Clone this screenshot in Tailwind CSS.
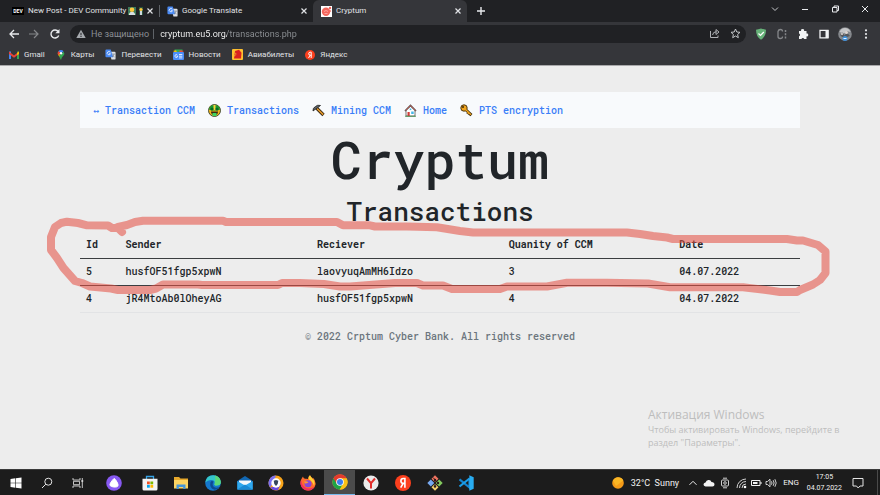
<!doctype html>
<html lang="ru">
    <head>
        <meta charset="UTF-8">
        <meta name="viewport" content="width=device-width, initial-scale=1.0">
        <title>Cryptum</title>
        <script src="https://cdn.jsdelivr.net/npm/@tailwindcss/browser@4"></script>
    </head>

    <body class="h-screen flex flex-col overflow-hidden bg-[#ededed] font-[Roboto,'Noto_Sans',sans-serif] text-[8px] leading-3">

        <!-- shared icons -->
        <svg class="hidden">
            <symbol id="close" viewBox="0 0 10 10"><path d="M2.5 2.5l5 5M7.5 2.5l-5 5" fill="none" stroke="currentColor" stroke-width="1.2"/></symbol>
            <symbol id="translate" viewBox="0 0 12 12">
                <path d="M5 3h5.5q1 0 1 1v6.500q0 1-1 1H7z" fill="#dfe1e5"/>
                <path d="M1.500.5h4.700l2.800 8.500H1.500q-1 0-1-1v-6.500q0-1 1-1z" fill="#4a8af4"/>
                <path d="M5.800 3.600a1.800 1.800 0 1 0 .2 1.500H4.300" fill="none" stroke="#fff" stroke-width=".8"/>
                <path d="M7.500 5.500h3.300M9.800 5.500q-.3 2-2 3.300M8.300 6.800l2 2.200" fill="none" stroke="#6d7a8c" stroke-width=".7"/>
            </symbol>
            <symbol id="yandex" viewBox="0 0 16 16">
                <circle cx="8" cy="8" r="8" fill="#fc3f1d"/>
                <path d="M9.900 12.700V3.500H8.300q-2.400 0-2.400 2.500 0 2.300 2.400 2.400h1.600M8 8.600l-2.300 4.100" fill="none" stroke="#fff" stroke-width="1.600"/>
            </symbol>
        </svg>

        <!-- tabs -->
        <header class="shrink-0 bg-[#202124] text-[#e1e3e6]">
            <div class="flex h-[22px]">
                <div class="w-[159px] flex items-center pl-3 pr-1">
                    <span class="w-3 h-2 bg-black text-white text-[5px] leading-2 font-bold text-center">DEV</span>
                    <span class="ml-1 whitespace-nowrap">New Post - DEV Community</span>
                    <svg class="ml-[2px] shrink-0 w-4 h-2" viewBox="0 0 16 8">
                        <rect width="8" height="8" fill="#3d7a5c"/><circle cx="4" cy="2.800" r="2.300" fill="#ffc83d"/><path d="M1 8q0-3 3-3t3 3z" fill="#f4ece0"/><rect x="2" y="5.500" width="4" height="2.500" fill="#d5dde3"/>
                        <rect x="11" width="4" height="8" fill="#28553f"/><circle cx="13" cy="2.500" r="1.600" fill="#ffc83d"/><rect x="12" y="4" width="2" height="4" fill="#cfd8dc"/>
                    </svg>
                    <button class="ml-auto" aria-label="Close tab"><svg class="w-[10px] h-[10px]"><use href="#close"/></svg></button>
                </div>
                <div class="w-[154px] flex items-center pl-2 pr-1">
                    <span class="-ml-2 mr-[7px] w-px h-3 bg-[#5f6368]"></span>
                    <svg class="w-[11px] h-[11px]"><use href="#translate"/></svg>
                    <span class="ml-1">Google Translate</span>
                    <button class="ml-auto" aria-label="Close tab"><svg class="w-[10px] h-[10px]"><use href="#close"/></svg></button>
                </div>
                <div class="w-[154px] flex items-center pl-2 pr-1 rounded-t-md bg-[#35363a]">
                    <svg class="w-[11px] h-[11px]" viewBox="0 0 11 11">
                        <rect width="11" height="11" fill="#fff"/><circle cx="5" cy="5.800" r="4.200" fill="#f4665c"/><circle cx="9" cy="2" r="1.200" fill="#f4665c"/><circle cx="9.500" cy="5" r=".7" fill="#f4665c"/><path d="M3 5.500q2-2 4 0M3.500 7.500h3" stroke="#fbb" fill="none" stroke-width=".7"/>
                    </svg>
                    <span class="ml-1">Cryptum</span>
                    <button class="ml-auto" aria-label="Close tab"><svg class="w-[10px] h-[10px]"><use href="#close"/></svg></button>
                </div>
                <button class="ml-[9px]" aria-label="New tab"><svg class="w-[10px] h-[10px]" viewBox="0 0 10 10"><path d="M5 1v8M1 5h8" stroke="#e8eaed" stroke-width="1.400"/></svg></button>
                <div class="ml-auto mr-[10px] pb-1 flex items-center gap-5">
                    <button aria-label="Search tabs"><svg class="w-[10px] h-[10px]" viewBox="0 0 10 10"><path d="M2 3.500l3 3 3-3" fill="none" stroke="#c6c8cb"/></svg></button>
                    <button aria-label="Minimize"><svg class="w-[10px] h-[10px]" viewBox="0 0 10 10"><path d="M2 5.500h6" stroke="#e8eaed"/></svg></button>
                    <button aria-label="Restore"><svg class="w-[10px] h-[10px]" viewBox="0 0 10 10"><path d="M2.500 3.500h4.500v4.500H2.500zM4 3.500V2h4.500v4.500H7" fill="none" stroke="#e8eaed"/></svg></button>
                    <button aria-label="Close"><svg class="w-[10px] h-[10px]" viewBox="0 0 10 10"><path d="M2 2l6 6M8 2l-6 6" stroke="#e8eaed"/></svg></button>
                </div>
            </div>

            <!-- toolbar -->
            <div class="bg-[#35363a] border-b border-[#a9a9ab]">
                <div class="h-[23px] flex items-center pl-2">
                    <button aria-label="Back"><svg class="w-3 h-3" viewBox="0 0 12 12"><path d="M11 6H2M6 2L2 6l4 4" fill="none" stroke="#e8eaed" stroke-width="1.300"/></svg></button>
                    <button class="ml-2" aria-label="Forward"><svg class="w-3 h-3" viewBox="0 0 12 12"><path d="M1 6h9M6 2l4 4-4 4" fill="none" stroke="#85878a" stroke-width="1.200"/></svg></button>
                    <button class="ml-[9px]" aria-label="Reload"><svg class="w-3 h-3" viewBox="0 0 12 12"><path d="M9.700 7.500A4 4 0 1 1 9.300 3.700" fill="none" stroke="#e8eaed" stroke-width="1.400"/><path d="M10.500 1v4.200H6.300z" fill="#e8eaed"/></svg></button>
                    <div class="ml-[9px] flex-1 h-[18px] rounded-full bg-[#202124] flex items-center pl-[6px] pr-[5px] text-[9px]">
                        <svg class="w-[10px] h-[10px]" viewBox="0 0 10 10"><path d="M5 .8L9.700 9H.3z" fill="#a5a9ad"/><path d="M5 3.800v2.500M5 7v1" stroke="#202124"/></svg>
                        <label for="address" class="ml-[5px] text-[#8b8f94] whitespace-nowrap">Не защищено</label>
                        <span class="ml-1 w-px h-[10px] bg-[#5f6368]"></span>
                        <input id="address" type="text" value="cryptum.eu5.org/transactions.php" class="ml-[6px] flex-1 h-3 bg-[linear-gradient(to_right,#fff_67px,#8f9397_67px)] bg-clip-text text-transparent outline-none">
                        <button aria-label="Share"><svg class="w-[11px] h-[11px]" viewBox="0 0 11 11"><path d="M1.500 3v6.500h7.500V7.500M3.500 7q.5-3.300 4-3.300M7 1.500l3 2.500-3 2.500V1.500z" fill="none" stroke="#aeb1b5"/></svg></button>
                        <button class="ml-[10px]" aria-label="Bookmark this page"><svg class="w-[11px] h-[11px]" viewBox="0 0 11 11"><path d="M5.500 1l1.300 3 3.200.3-2.400 2.200.7 3.200-2.800-1.700-2.800 1.700.7-3.200L1 4.300 4.200 4z" fill="none" stroke="#c4c7ca"/></svg></button>
                    </div>
                    <div class="ml-[9px] mr-2 flex items-center gap-[9px]">
                        <button aria-label="AdGuard"><svg class="w-3 h-3" viewBox="0 0 12 12"><path d="M6 .5q3 1 5 1.200 0 7-5 10-5-3-5-10Q3 1.500 6 .5z" fill="#67b279"/><path d="M3.500 5.500l2 2 3.300-3.500" fill="none" stroke="#fff" stroke-width="1.200"/></svg></button>
                        <button aria-label="Extension"><svg class="w-3 h-3" viewBox="0 0 12 12"><path d="M6.500 3.500Q6.500 1.500 4.500 1.500T2 3.500v5q0 2 2.300 2t2.200-2" fill="none" stroke="#85878a" stroke-width="1.300"/><path d="M9.500 2v8.500" stroke="#85878a" stroke-width="1.500" stroke-dasharray="2 1.200"/></svg></button>
                        <button aria-label="Extensions"><svg class="w-3 h-3" viewBox="0 0 12 12"><path d="M2 3h2.200a1.500 1.500 0 1 1 2.800 0h2.500v2.600a1.400 1.400 0 1 1 0 2.700V11H7.200a1.400 1.400 0 0 0-2.700 0H2V8.300a1.400 1.400 0 0 0 0-2.700z" fill="#f1f3f4"/></svg></button>
                        <button aria-label="Side panel"><svg class="w-3 h-3" viewBox="0 0 12 12"><path d="M2 2.300h8v7.500H2z" fill="none" stroke="#f1f3f4" stroke-width="1.300"/><path d="M7.500 2h3v8h-3z" fill="#f1f3f4"/></svg></button>
                        <button aria-label="Profile"><svg class="w-[14px] h-[14px] -mx-px" viewBox="0 0 14 14"><circle cx="7" cy="7" r="6.800" fill="#85888c"/><path d="M1.500 5Q3 1 7 1t5.500 4L9 4 6 6.500z" fill="#c5c6c8"/><path d="M2 8l2.500-2.500 2 3L9 5.500 12 9l-3 1H4z" fill="#55585d"/><circle cx="8.500" cy="5.500" r="1.500" fill="#ded5d0"/><circle cx="4" cy="7" r="1" fill="#dfd8d4"/><circle cx="7" cy="11.500" r="2.500" fill="#3f8fd8"/><path d="M5.500 11.500h3" stroke="#e3f0ff"/></svg></button>
                        <button aria-label="Menu"><svg class="w-3 h-3" viewBox="0 0 12 12" fill="#e8eaed"><circle cx="6" cy="2.300" r="1.100"/><circle cx="6" cy="6" r="1.100"/><circle cx="6" cy="9.700" r="1.100"/></svg></button>
                    </div>
                </div>
                <nav class="h-5 pb-px pl-[9px] flex items-center gap-[11px] whitespace-nowrap">
                    <a href="#" class="flex items-center gap-[5px]">
                        <svg class="w-[10px] h-[10px]" viewBox="0 0 10 10"><path d="M0 1.500h2V9H0z" fill="#4285f4"/><path d="M8 1.500h2V9H8z" fill="#34a853"/><path d="M0 1.500L5 5.500l5-4v2.400L5 7.700 0 3.900z" fill="#ea4335"/><path d="M8 3.100l2-1.600v2.400L8 5.300z" fill="#fbbc04"/></svg>
                        Gmail
                    </a>
                    <a href="#" class="flex items-center gap-[5px]">
                        <svg class="w-[10px] h-[10px]" viewBox="0 0 10 10"><path d="M5 10Q4.500 7 2.500 5.500 1 3 3 1.200z" fill="#fbbc04"/><path d="M5 10Q5.500 7 7.500 5.500 9 3.500 7.500 1.500L3 6z" fill="#34a853"/><path d="M5 0Q3.300 0 2.300 1.300L5 3.500l2.500-2.300Q6.500 0 5 0z" fill="#4285f4"/><path d="M2.300 1.300Q1 3 2 5l3-2z" fill="#ea4335"/><circle cx="5" cy="3.300" r="1.200" fill="#fff"/></svg>
                        Карты
                    </a>
                    <a href="#" class="flex items-center gap-[5px]">
                        <svg class="w-[11px] h-[11px]"><use href="#translate"/></svg>
                        Перевести
                    </a>
                    <a href="#" class="flex items-center gap-[5px]">
                        <svg class="w-[11px] h-[11px]" viewBox="0 0 11 11"><path d="M1.500.5h8v4h-8z" fill="#34a853"/><path d="M0 2l3-.7 2 4z" fill="#fbbc04"/><path d="M11 2L7 1.300l-2 4z" fill="#ea4335"/><rect y="3" width="11" height="8" rx="1" fill="#4a8df8"/><path d="M4.300 6A1.400 1.400 0 1 0 4.700 7.200H3.500M6 5.500h3.300M6 7.200h3.300M6 8.900h3.300" fill="none" stroke="#fff" stroke-width=".8"/></svg>
                        Новости
                    </a>
                    <a href="#" class="flex items-center gap-[5px]">
                        <svg class="w-[11px] h-[11px]" viewBox="0 0 11 11"><rect width="11" height="11" rx="1" fill="#fdc02f"/><path d="M2 9.500L3 2l4-1.200 2.500 3L9 9.500z" fill="#d9201f"/><path d="M1 8l3-2.500M3 4l1.500 1" stroke="#fdc02f" stroke-width=".7"/></svg>
                        Авиабилеты
                    </a>
                    <a href="#" class="flex items-center gap-[5px]">
                        <svg class="w-[10px] h-[10px]"><use href="#yandex"/></svg>
                        Яндекс
                    </a>
                </nav>
            </div>
        </header>

        <!-- page -->
        <main class="flex-1 min-h-0 flex flex-col px-20 pt-[26px] text-[#212529] font-['Roboto_Mono','DejaVu_Sans_Mono',monospace] text-[10px] font-medium">
            <nav class="h-9 shrink-0 pt-px px-[13px] flex items-center gap-[13px] bg-[#f8fafc] text-[#3b7ef8] whitespace-nowrap">
                <a href="#">↔ Transaction CCM</a>
                <a href="#" class="flex items-center gap-[6px]">
                    <svg class="w-[13px] h-[13px]" viewBox="0 0 13 13"><circle cx="6.500" cy="6.500" r="6" fill="#f4b51d" stroke="#20301c" stroke-width=".8"/><path d="M1 5.500Q1.500 1 6.500 1T12 5.500L9.500 6.500h-6z" fill="#189a33"/><path d="M5.500 1h2v5h-2z" fill="#ffd23c"/><circle cx="4" cy="5" r="1.500" fill="#0c6a24"/><circle cx="9" cy="5" r="1.500" fill="#0c6a24"/><path d="M3 7.500h7q0 3.500-3.500 3.500T3 7.500z" fill="#3a2b10"/><path d="M4.500 9h4v3h-4z" fill="#3fd260"/></svg>
                    Transactions
                </a>
                <a href="#" class="flex items-center gap-[6px]">
                    <svg class="w-[13px] h-[13px]" viewBox="0 0 13 13"><path d="M4.500 4l7 7" stroke="#2b1d0b" stroke-width="3.200"/><path d="M4.500 4l6.700 6.700" stroke="#e5982a" stroke-width="1.700"/><path d="M1 7Q.5 4 3.500 2.500 5.500.5 8.500 1.500L6 3.500 3 5.500z" fill="#5d6266" stroke="#222" stroke-width=".8"/></svg>
                    Mining CCM
                </a>
                <a href="#" class="flex items-center gap-[6px]">
                    <svg class="w-[13px] h-[13px]" viewBox="0 0 13 13"><path d="M2 6v6h9V6L6.500 2z" fill="#fff" stroke="#555" stroke-width=".8"/><path d="M1 7l5.500-5.500L12 7" fill="none" stroke="#555" stroke-width="1.600"/><path d="M1.500 6.500l5-5 5 5" fill="none" stroke="#df5144" stroke-width=".7"/><path d="M3.500 8h2.200v4H3.500z" fill="#d13c38"/><path d="M7.200 7.500h2.500v2.500H7.200z" fill="#43b7e8"/><path d="M5.700 4.500h1.600v1.600H5.700z" fill="#43b7e8"/><path d="M1 12.300h11" stroke="#3a8a43" stroke-width=".8"/></svg>
                    Home
                </a>
                <a href="#" class="flex items-center gap-[6px]">
                    <svg class="w-[13px] h-[13px]" viewBox="0 0 13 13"><path d="M5.500 5.500l6 5.500M8.500 8.500L7.500 10M10.500 10L9.500 11.500" stroke="#3b2808" stroke-width="2.800"/><circle cx="4" cy="4" r="3.200" fill="#f1a51e" stroke="#3b2808" stroke-width=".9"/><path d="M5.500 5.500l5.500 5.200M8.500 8.500L7.800 9.600" stroke="#f1a51e" stroke-width="1.500"/><circle cx="3" cy="3" r="1" fill="#3b2808"/></svg>
                    PTS encryption
                </a>
            </nav>

            <h1 class="text-center text-[52px] leading-[62px]">Cryptum</h1>
            <h2 class="mt-[5px] text-center text-[26px] leading-8">Transactions</h2>

            <div class="relative mt-1">
                <table class="w-full table-fixed text-left">
                    <colgroup>
                        <col class="w-[5.5%]"><col class="w-[26.6%]"><col class="w-[26.6%]"><col class="w-[23.7%]"><col>
                    </colgroup>
                    <thead>
                        <tr class="h-[27px] border-b border-[#3a3d40]">
                            <th class="px-[6px] pt-px">Id</th>
                            <th class="px-[6px] pt-px">Sender</th>
                            <th class="px-[6px] pt-px">Reciever</th>
                            <th class="px-[6px] pt-px">Quanity of CCM</th>
                            <th class="px-[6px] pt-px">Date</th>
                        </tr>
                    </thead>
                    <tbody>
                        <tr class="h-[27px] border-b border-[#3a3d40]">
                            <td class="px-[6px]">5</td>
                            <td class="px-[6px]">husfOF51fgp5xpwN</td>
                            <td class="px-[6px]">laovyuqAmMH6Idzo</td>
                            <td class="px-[6px]">3</td>
                            <td class="px-[6px]">04.07.2022</td>
                        </tr>
                        <tr class="h-[27px] border-b border-[#e2e3e5]">
                            <td class="px-[6px]">4</td>
                            <td class="px-[6px]">jR4MtoAb0lOheyAG</td>
                            <td class="px-[6px]">husfOF51fgp5xpwN</td>
                            <td class="px-[6px]">4</td>
                            <td class="px-[6px]">04.07.2022</td>
                        </tr>
                    </tbody>
                </table>

                <!-- marker line around the newest transaction -->
                <svg class="absolute -left-10 -top-5 w-[calc(100%+80px)] h-[88px] pointer-events-none" viewBox="40 211 800 88" preserveAspectRatio="none">
                    <path d="M122 232L118 228 112 228 108 225.500 87 225.300 78 223 67 221.700 61 223 55 227 51 237V250L57 258 63.500 268 75 281 82 283 90 286.500 111 288.500 118 290H150L156 288.500 163 284.500H198L202 285H278L282 283H300L324 284 340 286.500H350L363 285.500 395 283 417 283 423 285.500H443L452 289H500L507 286.500H547L567 282.800H607L648 283.500 670 287.300H743L770 290.500 780 292H797L800 290 813 284.500 820 280 825.500 273V251.500L818 245 803 240.500 797 240.500 787 239H673L667 237.500 653 236 640 234 627 232.500H473L460 231 437 227.300 407 226.500H375L370 225.300H343L337 222H226L223 220.800H143L135 222 127 225 118 227" fill="none" stroke="#e45144" stroke-opacity=".57" stroke-width="8" stroke-linecap="round" stroke-linejoin="round"/>
                </svg>
            </div>

            <footer class="mt-[18px] text-center text-[#6c757d]">© 2022 Crptum Cyber Bank. All rights reserved</footer>

            <aside class="mt-auto mb-5 -mr-12 self-end w-[200px] font-['Open_Sans',sans-serif] font-normal text-[9px] leading-[13px] text-[#bdbdbd]">
                <p class="text-[12px] leading-4">Активация Windows</p>
                <p>Чтобы активировать Windows, перейдите в раздел "Параметры".</p>
            </aside>
        </main>

        <!-- taskbar -->
        <footer class="shrink-0 h-[26px] flex items-center bg-[#1c1c1c] border-t border-[#3a3a3a] text-[#f2f2f2] whitespace-nowrap">
            <button class="w-[31px] flex justify-center" aria-label="Start"><svg class="w-3 h-3" viewBox="0 0 12 12" fill="#fff"><path d="M.5 2l4.800-.7v4.400H.5zM5.900 1.200L11.500.4v5.300H5.900zM.5 6.300h4.800v4.400L.5 10zM5.900 6.300h5.600v5.300l-5.600-.8z"/></svg></button>
            <button class="w-[31px] flex justify-center" aria-label="Search"><svg class="w-3 h-3" viewBox="0 0 12 12"><circle cx="7.300" cy="4.700" r="3.500" fill="none" stroke="#e4e4e4"/><path d="M4.800 7.200L1 11" stroke="#e4e4e4"/></svg></button>
            <button class="w-[31px] flex justify-center" aria-label="Task view"><svg class="w-3 h-3" viewBox="0 0 12 12" fill="none" stroke="#d8d8d8" stroke-width=".9"><path d="M1 1v2h7V1M1 11V9h7v2M1.500 4.300h6v3.400h-6zM10.300 1v10"/><path d="M9.400 4h1.800" stroke-width="1.800"/></svg></button>
            <button class="w-[41px] flex justify-center" aria-label="Алиса"><svg class="w-4 h-4" viewBox="0 0 16 16"><circle cx="8" cy="8" r="7.800" fill="#8759f2"/><path d="M8 3.500q1.300 0 3.500 4.500t-3.500 4-3.500-4T8 3.500z" fill="#fff" stroke="#fff" stroke-linejoin="round"/></svg></button>
            <div class="w-[348px] h-full grid grid-cols-11">
                <button class="flex items-center justify-center" aria-label="Microsoft Store"><svg class="w-4 h-4" viewBox="0 0 16 16"><path d="M4.500 4V1.500h7V4" fill="none" stroke="#37a5e8" stroke-width="1.300"/><path d="M.5 3.800h15V14q0 1.500-1.500 1.500H2Q.5 15.500.5 14z" fill="#f4f4f4"/><path d="M5 6.500h2.800v2.800H5z" fill="#f25022"/><path d="M8.400 6.500h2.800v2.800H8.400z" fill="#7fba00"/><path d="M5 9.900h2.800v2.800H5z" fill="#00a4ef"/><path d="M8.400 9.900h2.800v2.800H8.400z" fill="#ffb900"/></svg></button>
                <button class="flex items-center justify-center" aria-label="Explorer"><svg class="w-4 h-4" viewBox="0 0 16 16"><path d="M1 2h5l1.500 1.500H15V13H1z" fill="#e8a92c"/><path d="M1 5h14v8.500H1z" fill="#fcd462"/><path d="M3.500 14V9.500h9V14h-2.300v-2H5.800v2z" fill="#4596d8"/></svg></button>
                <button class="flex items-center justify-center" aria-label="Edge"><svg class="w-4 h-4" viewBox="0 0 16 16"><circle cx="8" cy="8" r="7.800" fill="#1577cc"/><path d="M.3 7.500Q1.300.2 8.300.2q7 .5 7.500 6.800 0 3.500-4.300 3.500-3 0-1.800-2Q10 5 6.500 5 2.500 4.800.3 7.500z" fill="#35c6c9"/><path d="M10 .5q5.500 1.500 5.800 6.500 0 3.500-4.300 3.500-3 0-1.800-2Q11 4 10 .5z" fill="#5bd878"/><path d="M5.500 7q-1.500 6 4 7.800 3 .2 5-3-3 1.700-5.500.2Q6.500 10 8.500 6.500 6.500 5.500 5.500 7z" fill="#0c4a93"/></svg></button>
                <button class="flex items-center justify-center" aria-label="Mail"><svg class="w-4 h-4" viewBox="0 0 16 16"><path d="M.3 6L8 1l7.700 5v8.500H.3z" fill="#1268b3"/><path d="M2 5.500h12V11H2z" fill="#f5f9fc"/><path d="M.3 6L8 10.500 15.700 6v8.500H.3z" fill="#2fa8ee"/><path d="M.3 14.500L8 9.500l7.700 5z" fill="#1a8ad4"/></svg></button>
                <button class="flex items-center justify-center" aria-label="Secure Browser"><svg class="w-4 h-4" viewBox="0 0 16 16"><circle cx="8" cy="8" r="7.500" fill="#f9a51a"/><path d="M8 .5A7.500 7.500 0 0 0 2 12.500L5 8z" fill="#7a6ff0"/><path d="M2 12.500Q5 16 10 15.200l2-5z" fill="#6a4be0"/><circle cx="8" cy="8" r="4.700" fill="#fff"/><path d="M8 5l2.300.8Q10.300 9.500 8 11 5.700 9.500 5.700 5.800z" fill="#34445c"/></svg></button>
                <button class="flex items-center justify-center" aria-label="Firefox"><svg class="w-4 h-4" viewBox="0 0 16 16"><path d="M1 5Q2 2.500 3 1.500q.3 1.800 2 2.300Q7 3.500 8 4q.5-2.500 2-3.700Q11 2.500 13 4q0-1-.3-1.800Q15.700 5 15.700 9A7.700 7.700 0 0 1 .5 9Q.3 7 1 5z" fill="#ff6a2c"/><path d="M10 .3Q11 2.500 13 4q2.500 3 1 7-1.500-5-5-6.500-1.500-2 1-4.200z" fill="#ffd035"/><path d="M.5 9A7.700 7.700 0 0 0 14.500 12Q8 15 4 11.500 1.500 9 1 5 .3 7 .5 9z" fill="#f22f5f"/><circle cx="8" cy="8.700" r="3.500" fill="#8748d8"/><path d="M4 6.500q2.500-.8 4.500.7Q7 8.500 5 8.500z" fill="#ff9a30"/></svg></button>
                <button class="flex items-center justify-center bg-[#4b4b4b] border-b border-[#76b9ed]" aria-label="Chrome"><svg class="w-4 h-4" viewBox="0 0 16 16"><circle cx="8" cy="8" r="7.600" fill="#fbc116"/><path d="M8 8L1.400 4.200A7.600 7.600 0 0 0 7.800 15.600L11.200 9.800z" fill="#1ea446"/><path d="M8 4.300h6.600A7.600 7.600 0 0 1 7.800 15.600L11.200 9.800z" fill="#fbc116"/><path d="M1.400 4.200A7.600 7.600 0 0 1 14.600 4.200H8L4.800 9.800z" fill="#e33b2e"/><circle cx="8" cy="8" r="3.800" fill="#fff"/><circle cx="8" cy="8" r="3" fill="#3c7ef0"/></svg></button>
                <button class="flex items-center justify-center" aria-label="Yandex Browser"><svg class="w-4 h-4" viewBox="0 0 16 16"><circle cx="8" cy="8" r="7.600" fill="#ebebeb"/><path d="M4 3.500l4 4.700 4-4.700M8 8v5.500" fill="none" stroke="#e22f2c" stroke-width="2"/></svg></button>
                <button class="flex items-center justify-center" aria-label="Яндекс"><svg class="w-4 h-4"><use href="#yandex"/></svg></button>
                <button class="flex items-center justify-center" aria-label="Git"><svg class="w-4 h-4" viewBox="0 0 16 16"><path d="M8 .2L11.500 3.700 8 7.200 4.500 3.700z" fill="#f07561"/><path d="M3.800 4.500L7.300 8l-3.500 3.500L.3 8z" fill="#78a9f0"/><path d="M12.200 4.500L15.700 8l-3.500 3.500L8.700 8z" fill="#83c95e"/><path d="M8 8.800l3.500 3.500L8 15.800l-3.500-3.500z" fill="#f4d06c"/><path d="M6 2.500l4.500 4.800M8 4.500v7.300" fill="none" stroke="#2a1a1a"/><circle cx="8" cy="5" r="1.200" fill="#2a1a1a"/><circle cx="8" cy="11.500" r="1.200" fill="#2a1a1a"/><circle cx="11" cy="8" r="1.200" fill="#2a1a1a"/></svg></button>
                <button class="flex items-center justify-center" aria-label="Visual Studio Code"><svg class="w-4 h-4" viewBox="0 0 16 16"><path d="M11.500 3.500v9L1.500 4.300" fill="none" stroke="#1483cf" stroke-width="2.200"/><path d="M11.500 3.500l-10 8" fill="none" stroke="#1a9de8" stroke-width="2.200"/><path d="M11.300.3l4.400 2v11.400l-4.400 2z" fill="#29adf2"/></svg></button>
            </div>

            <div class="ml-auto h-full flex items-center">
                <svg class="w-3 h-3" viewBox="0 0 12 12"><circle cx="6" cy="6" r="5.800" fill="#f59b18"/><path d="M1 3.500Q3 .2 6 .2q4 0 5.300 3.300L4 9z" fill="#fbb624"/></svg>
                <span class="ml-[7px] text-[9px]">32°C&nbsp; Sunny</span>
                <button class="ml-[9px]" aria-label="Hidden icons"><svg class="w-[10px] h-[10px]" viewBox="0 0 10 10"><path d="M1.500 6.800L5 3.300l3.500 3.500" fill="none" stroke="#eee"/></svg></button>
                <svg class="ml-[5px] w-3 h-3" viewBox="0 0 12 12"><path d="M2.500 9.500q-2-.3-2-2T2.500 5.500Q3.500 2.500 6 3q1.800.2 2.500 2 3 0 3 2.500 0 2-2 2z" fill="#f2f2f2"/></svg>
                <svg class="ml-[4px] w-3 h-3" viewBox="0 0 12 12" fill="none" stroke="#e4e4e4" stroke-width=".9"><rect x="2.500" y="3" width="7" height="6" rx="1"/><path d="M4 1.200h4M4 10.800h4"/><circle cx="6" cy="6" r="1.300"/></svg>
                <svg class="ml-[4px] w-3 h-3" viewBox="0 0 12 12"><path d="M2 11A9 9 0 0 1 11 2M4.500 11A6.500 6.500 0 0 1 11 4.500M7 11A4 4 0 0 1 11 7" fill="none" stroke="#cfcfcf"/><circle cx="10" cy="10" r="1.300" fill="#fff"/></svg>
                <svg class="ml-[3px] w-3 h-3" viewBox="0 0 12 12"><path d="M1.500 3.500h8.500v5H1.500z" fill="none" stroke="#f2f2f2"/><path d="M3 5h4.500v2H3z" fill="#f2f2f2"/><path d="M11 5v2" stroke="#f2f2f2"/></svg>
                <svg class="ml-[3px] w-3 h-3" viewBox="0 0 12 12" fill="none" stroke="#e4e4e4" stroke-width=".9"><path d="M1 4.500h1.500L5 2.200v7.600L2.500 7.500H1zM6.500 4.300q1 1.700 0 3.400M8.200 3.200q1.800 2.800 0 5.600M9.900 2.200q2.600 3.800 0 7.600"/></svg>
                <button class="ml-[6px]">ENG</button>
                <div class="ml-2 text-center text-[7px] leading-[11px]">17:05<br>04.07.2022</div>
                <button class="ml-[10px]" aria-label="Notifications"><svg class="w-3 h-3" viewBox="0 0 12 12"><path d="M1 1.500h10v7.500H8L6.200 11 4.500 9H1z" fill="none" stroke="#e4e4e4"/></svg></button>
                <span class="ml-[13px] mr-[2px] w-px h-full bg-[#4a4a4a]"></span>
            </div>
        </footer>
    </body>
</html>
